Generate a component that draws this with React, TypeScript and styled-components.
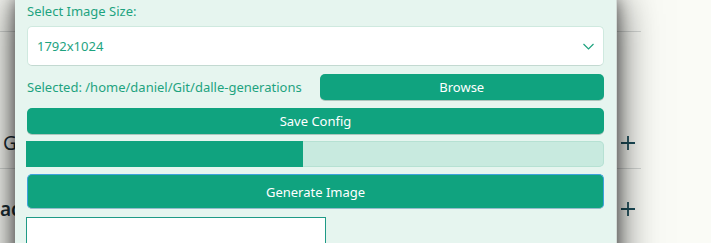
import React from "react"
import styled, { createGlobalStyle } from "styled-components"

const GlobalStyle = createGlobalStyle`
  html, body {
    margin: 0;
    padding: 0;
    background: #fafbf6;
    font-family: "Noto Sans", "Open Sans", sans-serif;
  }
`

// the page behind the settings dialog
const Page = styled.div`
  position: relative;
  width: 711px;
  height: 243px;
  overflow: hidden;
  background: #fafbf6;
`

const List = styled.div`
  width: 641px;
  display: flex;
  flex-direction: column;
`

const Row = styled.div<{ $h: number; $line?: boolean }>`
  height: ${(p) => p.$h}px;
  display: flex;
  align-items: center;
  justify-content: space-between;
  padding-right: 6px;
  box-sizing: border-box;
  border-bottom: ${(p) => (p.$line ? "1px solid #d6d9d6" : "none")};
  color: #1c2f36;
  font-size: 19px;
`

const RowTitle = styled.span<{ $indent: number; $bold?: boolean }>`
  padding-left: ${(p) => p.$indent}px;
  font-weight: ${(p) => (p.$bold ? 600 : 400)};
`

const PlusIcon = () => (
  <svg width="14" height="14" viewBox="0 0 14 14">
    <path d="M7 0v14M0 7h14" stroke="#1d4f5c" strokeWidth="1.8" />
  </svg>
)

// dialog
const Dialog = styled.div`
  position: absolute;
  left: 15px;
  top: 0;
  width: 602px;
  height: 300px;
  box-sizing: border-box;
  padding: 2px 12px 0 12px;
  background: #e6f5ef;
  border-right: 1px solid #d3dbd7;
  box-shadow: 0 0 40px rgba(0, 0, 0, 0.7), 0 0 14px rgba(0, 0, 0, 0.45);
  display: flex;
  flex-direction: column;
`

const Label = styled.div`
  font-size: 13px;
  line-height: 18px;
  color: #1ea37f;
`

const Select = styled.div`
  margin-top: 6px;
  height: 40px;
  box-sizing: border-box;
  background: #ffffff;
  border: 1px solid #cfe9df;
  border-bottom-color: #c3d9d1;
  border-radius: 5px;
  padding: 0 9px 0 9px;
  display: flex;
  align-items: center;
  justify-content: space-between;
  font-size: 13px;
  color: #1ea37f;
`

const Chevron = () => (
  <svg width="11" height="7" viewBox="0 0 11 7">
    <path d="M0.5 1l5 5 5-5" fill="none" stroke="#1ea37f" strokeWidth="1.2" />
  </svg>
)

const PathRow = styled.div`
  margin-top: 8px;
  display: grid;
  grid-template-columns: 1fr 1fr;
  gap: 8px;
  align-items: center;
`

const Button = styled.button<{ $h: number; $focus?: boolean }>`
  height: ${(p) => p.$h}px;
  width: 100%;
  box-sizing: border-box;
  background: #10a37f;
  color: #ffffff;
  font-family: "Noto Sans", "Open Sans", sans-serif;
  font-size: 13px;
  border: ${(p) => (p.$focus ? "1px solid #3fa2dc" : "none")};
  border-bottom-color: ${(p) => (p.$focus ? "#96bccb" : "transparent")};
  border-radius: 5px;
  box-shadow: ${(p) => (p.$focus ? "none" : "0 1px 0 rgba(0, 60, 40, 0.25)")};
  padding: 0;
  margin: 0;
  display: flex;
  align-items: center;
  justify-content: center;
`

const Stack = styled.div<{ $top: number }>`
  margin-top: ${(p) => p.$top}px;
`

const Track = styled.div`
  margin-left: -1px;
  height: 26px;
  box-sizing: border-box;
  background: #c8eadf;
  border-radius: 0 5px 5px 0;
  box-shadow: inset 0 0 0 1px #b6e1d3;
  display: flex;
  overflow: hidden;
`

const Fill = styled.div`
  height: 100%;
  background: #10a37f;
`

const Preview = styled.div`
  margin-top: 8px;
  margin-left: -1px;
  width: 300px;
  height: 60px;
  box-sizing: border-box;
  background: #ffffff;
  border: 1px solid #1f9a86;
`

export default function App() {
  const progress = 48

  return (
    <>
      <GlobalStyle />
      <Page>
        <List>
          <Row $h={32} $line />
          <Row $h={85} />
          <Row $h={52} $line>
            <RowTitle $indent={3}>Gallery</RowTitle>
            <PlusIcon />
          </Row>
          <Row $h={80}>
            <RowTitle $indent={0} $bold>
              acerca
            </RowTitle>
            <PlusIcon />
          </Row>
        </List>

        <Dialog>
          <Label>Select Image Size:</Label>
          <Select>
            <span>1792x1024</span>
            <Chevron />
          </Select>
          <PathRow>
            <Label>Selected: /home/daniel/Git/dalle-generations</Label>
            <Button $h={26}>Browse</Button>
          </PathRow>
          <Stack $top={8}>
            <Button $h={26}>Save Config</Button>
          </Stack>
          <Stack $top={7}>
            <Track>
              <Fill style={{ width: `${progress}%` }} />
            </Track>
          </Stack>
          <Stack $top={7}>
            <Button $h={35} $focus>
              Generate Image
            </Button>
          </Stack>
          <Preview />
        </Dialog>
      </Page>
    </>
  )
}
